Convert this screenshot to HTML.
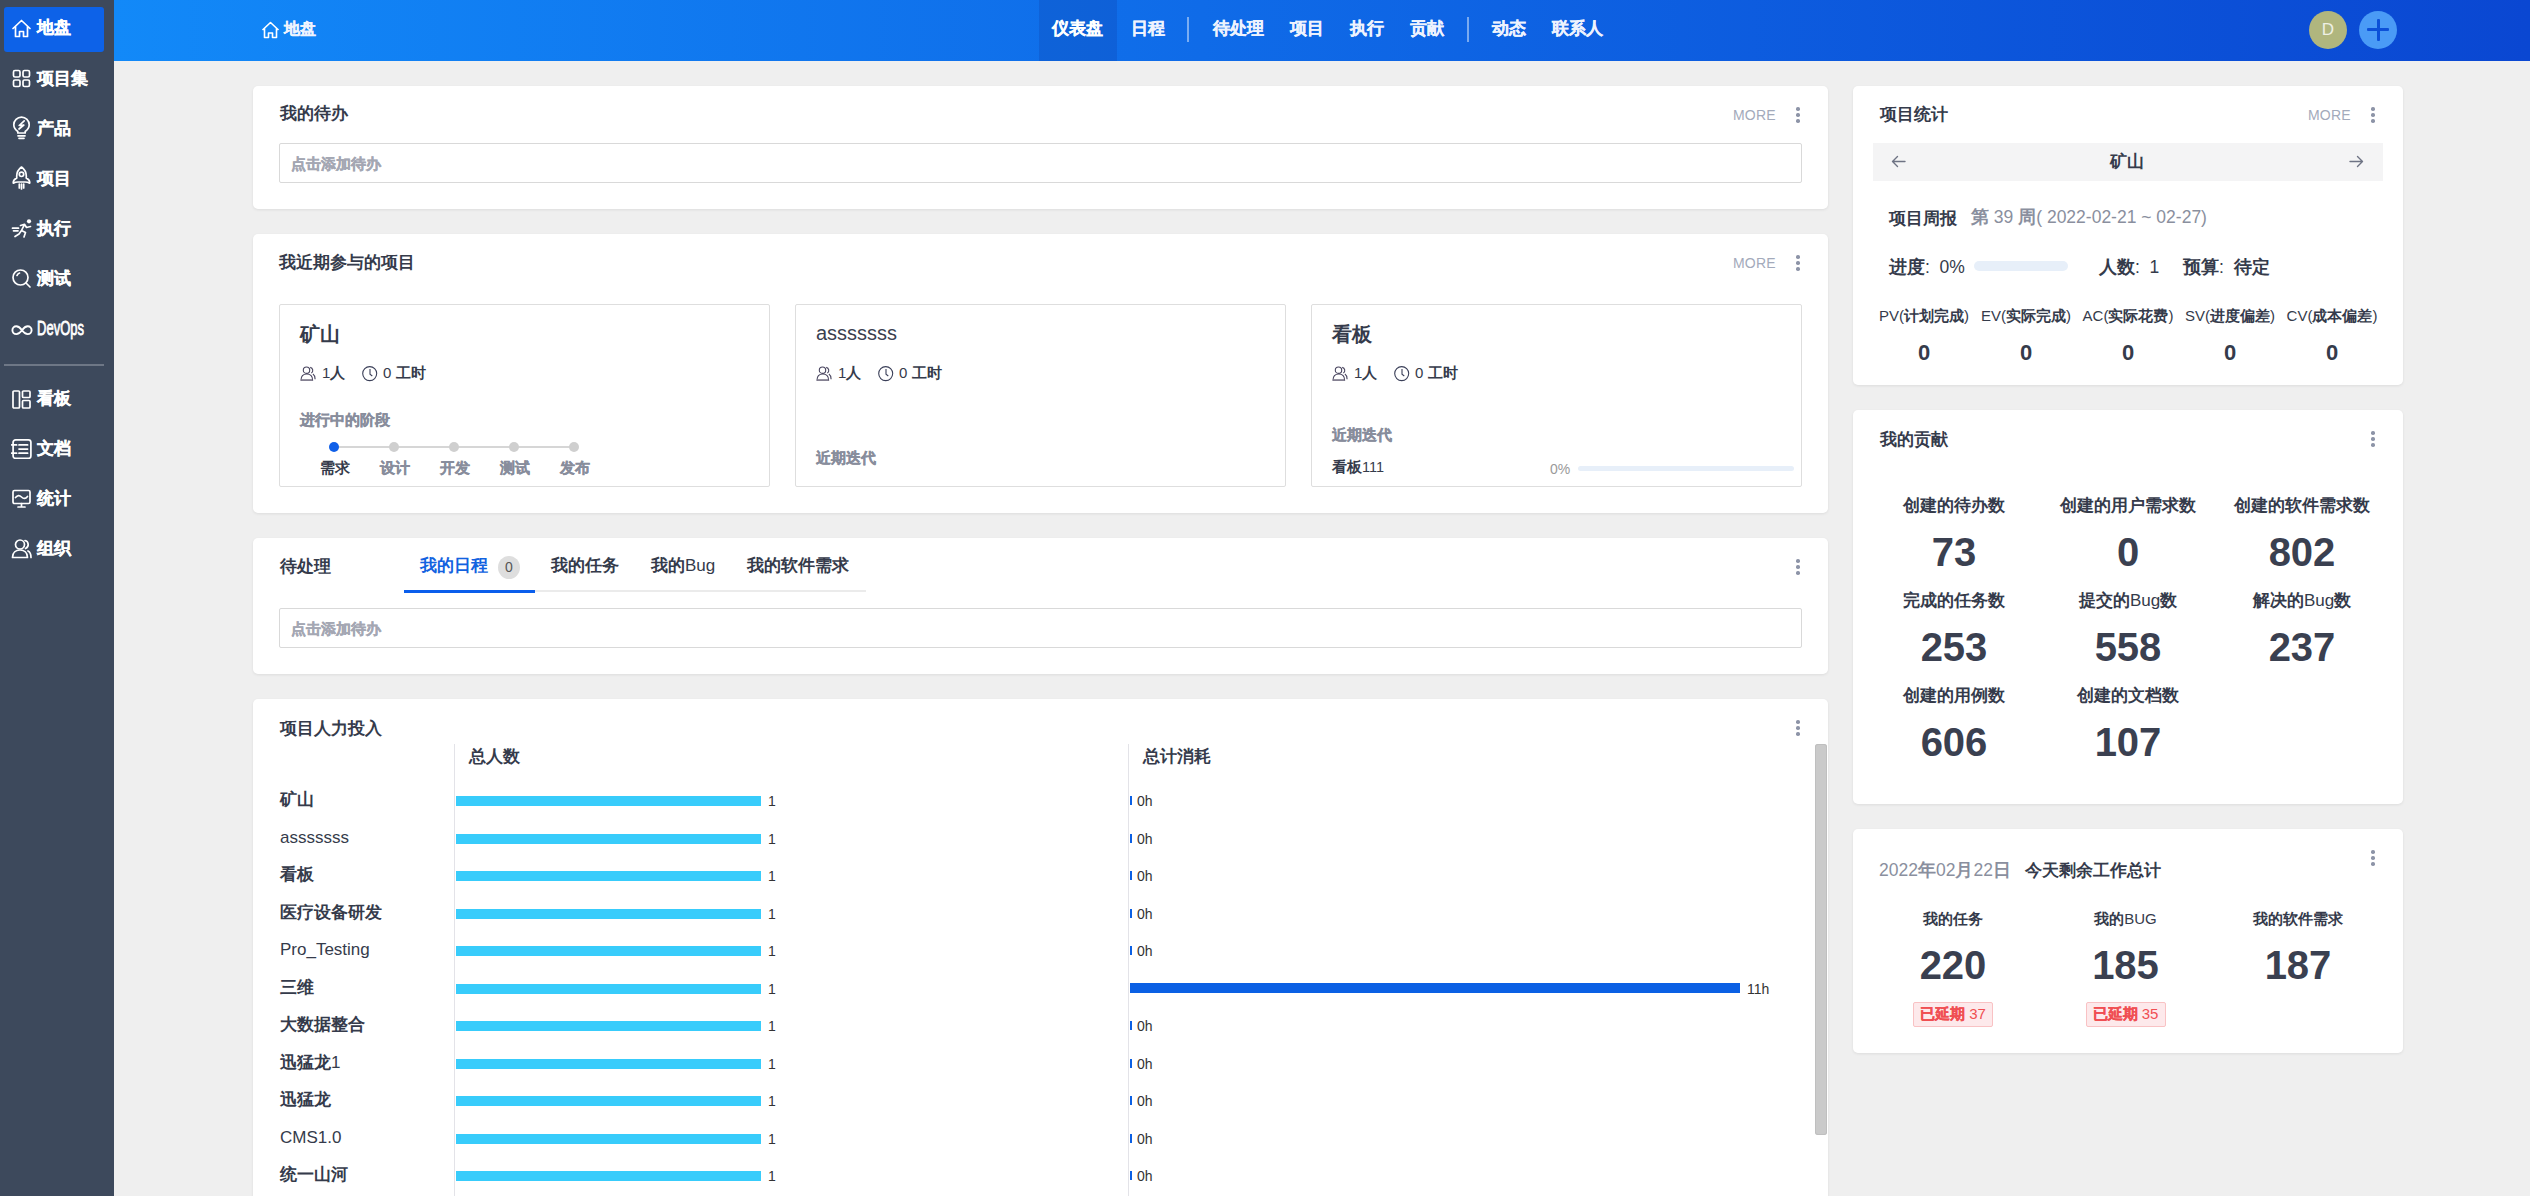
<!DOCTYPE html>
<html><head><meta charset="utf-8">
<style>
*{margin:0;padding:0;box-sizing:border-box}
html,body{width:2530px;height:1196px;overflow:hidden}
body{background:#efefef;font-family:"Liberation Sans",sans-serif;color:#353b4b;position:relative}
.a{position:absolute;white-space:nowrap}
.b{font-weight:bold}
#side{position:absolute;left:0;top:0;width:114px;height:1196px;background:#3d495c}
#side .it{position:absolute;left:37px;font-size:17px;line-height:17px;font-weight:bold;color:#fff;-webkit-text-stroke:0.3px #fff}
#side svg{position:absolute;left:11px;width:21px;height:21px;fill:none;stroke:#fff;stroke-width:1.7;stroke-linecap:round;stroke-linejoin:round}
#hdr{position:absolute;left:114px;top:0;width:2416px;height:61px;background:linear-gradient(90deg,#1289f8 0%,#0f6be8 45%,#0a47d2 100%)}
.nav{position:absolute;top:20px;font-size:17px;line-height:17px;font-weight:bold;color:#eef3fe;-webkit-text-stroke:0.25px #eef3fe}
.card{position:absolute;background:#fff;border-radius:5px;box-shadow:0 1px 3px rgba(0,0,0,0.08)}
.ttl{position:absolute;font-size:17px;line-height:17px;font-weight:bold;color:#353b4b;white-space:nowrap}
.more{position:absolute;font-size:14px;line-height:14px;color:#a3aabb;letter-spacing:0.2px}
.dots{position:absolute;width:4px;height:16px}
.dots i{position:absolute;left:0.25px;width:3.5px;height:3.5px;border-radius:50%;background:#8d94a7}
.inp{position:absolute;border:1px solid #d9d9d9;border-radius:2px;background:#fff}
.ph{position:absolute;font-size:15px;line-height:15px;font-weight:700;color:#a4a7b3;-webkit-text-stroke:0.35px #a4a7b3;white-space:nowrap}
.pc{position:absolute;border:1px solid #dedede;border-radius:2px;background:#fff}
.gray{color:#888d9c;font-weight:700;-webkit-text-stroke:0.35px #888d9c}
</style></head><body>

<!-- SIDEBAR -->
<div id="side">
  <div class="a" style="left:4px;top:7px;width:100px;height:45px;background:#0d62e8;border-radius:3px"></div>
  <svg style="top:18px" viewBox="0 0 21 21"><path d="M2 10.5 L10.5 2.5 L19 10.5 M4.5 8.5 V18.5 H8.5 V13.5 H12.5 V18.5 H16.5 V8.5"/></svg>
  <div class="it" style="top:19px">地盘</div>
  <svg style="top:68px" viewBox="0 0 21 21"><rect x="2.5" y="2.5" width="6.5" height="6.5" rx="1.5"/><rect x="12" y="2.5" width="6.5" height="6.5" rx="1.5"/><rect x="2.5" y="12" width="6.5" height="6.5" rx="1.5"/><rect x="12" y="12" width="6.5" height="6.5" rx="1.5"/></svg>
  <div class="it" style="top:70px">项目集</div>
  <svg style="top:116px;height:24px" viewBox="0 0 21 24"><path d="M6.8 15.5 C4 13.5 2.8 11 2.8 8.8 A7.7 7.7 0 0 1 18.2 8.8 C18.2 11 17 13.5 14.2 15.5 V17 H6.8 Z M7 19.8 H14 M8 22.3 H13 M13.2 4.8 L8.2 9.5 L12.8 9 L8 13"/></svg>
  <div class="it" style="top:120px">产品</div>
  <svg style="top:166px;height:24px" viewBox="0 0 21 24"><path d="M10.5 1 C6.5 4 5.3 8 5.8 12 C3.3 13.3 2 15 2.3 17.2 C3.8 16.4 5.3 16 7 16 H14 C15.7 16 17.2 16.4 18.7 17.2 C19 15 17.7 13.3 15.2 12 C15.7 8 14.5 4 10.5 1 Z"/><circle cx="10.5" cy="8.3" r="2.2"/><path d="M8.3 18 V22 M10.5 18 V23 M12.7 18 V22"/></svg>
  <div class="it" style="top:170px">项目</div>
  <svg style="top:218px;width:22px" viewBox="0 0 22 21"><circle cx="18" cy="3.3" r="2.1" fill="#fff" stroke="none"/><path d="M9.5 7.5 L13.5 6.3 L15.5 9.5 L19.5 8.5 M13.5 6.3 L10.5 12.5 L14.5 14.5 L13 19 M10.5 12.5 L8 16 L4 18.5 M1.5 10.2 H7.5 M2.5 12.8 H7"/></svg>
  <div class="it" style="top:220px">执行</div>
  <svg style="top:268px" viewBox="0 0 21 21"><circle cx="9.5" cy="9.5" r="7.5"/><path d="M15 15 L19 19 M6 7.5 A4 4 0 0 1 8.5 5"/></svg>
  <div class="it" style="top:270px">测试</div>
  <svg style="top:320px;width:22px" viewBox="0 0 22 21" style="stroke-width:2"><path style="stroke-width:1.9" d="M11 10.2 C8.8 7.2 6.8 6.3 5.3 6.3 A3.9 3.9 0 0 0 5.3 14.1 C6.8 14.1 8.8 13.2 11 10.2 C13.2 7.2 15.2 6.3 16.7 6.3 A3.9 3.9 0 0 1 16.7 14.1 C15.2 14.1 13.2 13.2 11 10.2 Z"/></svg>
  <div class="a b" style="left:37px;top:317px;font-size:21px;line-height:21px;color:#fff;font-weight:normal;transform:scaleX(0.62);transform-origin:0 0;-webkit-text-stroke:0.8px #fff">DevOps</div>
  <div class="a" style="left:4px;top:364px;width:100px;height:2px;background:#6e7786"></div>
  <svg style="top:389px" viewBox="0 0 21 21"><rect x="2" y="2" width="6.5" height="17" rx="1"/><rect x="11.5" y="2" width="7.5" height="6.5" rx="1"/><rect x="11.5" y="11.5" width="7.5" height="7.5" rx="1"/></svg>
  <div class="it" style="top:390px">看板</div>
  <svg style="top:438px;width:22px" viewBox="0 0 22 21" style="overflow:visible"><rect x="2.1" y="1.8" width="17.8" height="18.6" rx="2.5"/><path d="M0.6 6.9 H5.6 M0.6 15.2 H5.6 M8 6.9 H16.6 M8 11.1 H16.6 M8 15.2 H16.6"/></svg>
  <div class="it" style="top:440px">文档</div>
  <svg style="top:488px" viewBox="0 0 21 21"><rect x="2" y="2.5" width="17" height="13" rx="1.5"/><path d="M7 19 H14 M10.5 15.5 V19 M4.5 9.5 C6.5 7 8.5 7 10.5 9 C12.5 11 14.5 11 16.5 8.5"/></svg>
  <div class="it" style="top:490px">统计</div>
  <svg style="top:538px" viewBox="0 0 21 21"><circle cx="9" cy="6.5" r="4.5"/><path d="M1.5 19.5 C1.5 14.5 5 12 9 12 C13 12 16.5 14.5 16.5 19.5 Z M14 2.5 A4.2 4.2 0 0 1 14.5 10.5 M17 13 C19 14 20 16.5 20 19.5"/></svg>
  <div class="it" style="top:540px">组织</div>
</div>

<!-- HEADER -->
<div id="hdr">
  <div class="a" style="left:925px;top:0;width:78px;height:61px;background:rgba(10,40,140,0.18)"></div>
</div>
<svg class="a" style="left:261px;top:21px;width:19px;height:18px" viewBox="0 0 19 18" fill="none" stroke="#fff" stroke-width="1.6" stroke-linejoin="round"><path d="M1.5 9 L9.5 1.5 L17.5 9 M3.5 7.5 V16.5 H7.5 V12 H11.5 V16.5 H15.5 V7.5"/></svg>
<div class="nav" style="left:284px;top:21px;font-size:16px;line-height:16px">地盘</div>
<div class="nav" style="left:1052px;color:#fff;-webkit-text-stroke:0.25px #fff">仪表盘</div>
<div class="nav" style="left:1131px">日程</div>
<div class="a" style="left:1187px;top:17px;width:2px;height:25px;background:rgba(255,255,255,0.45)"></div>
<div class="nav" style="left:1213px">待处理</div>
<div class="nav" style="left:1290px">项目</div>
<div class="nav" style="left:1350px">执行</div>
<div class="nav" style="left:1410px">贡献</div>
<div class="a" style="left:1467px;top:17px;width:2px;height:25px;background:rgba(255,255,255,0.45)"></div>
<div class="nav" style="left:1492px">动态</div>
<div class="nav" style="left:1552px">联系人</div>
<div class="a" style="left:2309px;top:11px;width:38px;height:38px;border-radius:50%;background:#b0b67e;color:#eef0e4;font-size:17px;line-height:38px;text-align:center">D</div>
<div class="a" style="left:2359px;top:11px;width:38px;height:38px;border-radius:50%;background:#4a9bf6"></div>
<div class="a" style="left:2367px;top:28px;width:22px;height:3px;background:#0c50d8;border-radius:1px"></div>
<div class="a" style="left:2376.5px;top:19px;width:3px;height:22px;background:#0c50d8;border-radius:1px"></div>

<!-- LEFT COLUMN -->
<!-- card 1 -->
<div class="card" style="left:253px;top:86px;width:1575px;height:123px"></div>
<div class="ttl" style="left:280px;top:105px">我的待办</div>
<div class="more" style="left:1733px;top:108px">MORE</div>
<div class="dots" style="left:1796px;top:107px"><i style="top:0"></i><i style="top:6px"></i><i style="top:12px"></i></div>
<div class="inp" style="left:279px;top:143px;width:1523px;height:40px"></div>
<div class="ph" style="left:291px;top:156px">点击添加待办</div>

<!-- card 2 -->
<div class="card" style="left:253px;top:234px;width:1575px;height:279px"></div>
<div class="ttl" style="left:279px;top:254px">我近期参与的项目</div>
<div class="more" style="left:1733px;top:256px">MORE</div>
<div class="dots" style="left:1796px;top:255px"><i style="top:0"></i><i style="top:6px"></i><i style="top:12px"></i></div>


<!-- project cards -->
<div class="pc" style="left:279px;top:304px;width:491px;height:183px"></div>
<div class="pc" style="left:795px;top:304px;width:491px;height:183px"></div>
<div class="pc" style="left:1311px;top:304px;width:491px;height:183px"></div>

<div class="a b" style="left:300px;top:325px;font-size:19.5px;line-height:19.5px;color:#353b4b">矿山</div>
<div class="a" style="left:816px;top:323px;font-size:20px;line-height:20px;color:#3a4050">asssssss</div>
<div class="a b" style="left:1332px;top:325px;font-size:19.5px;line-height:19.5px;color:#353b4b">看板</div>

<!-- meta rows -->
<svg class="a" style="left:300px;top:366px;width:17px;height:16px" viewBox="0 0 17 16" fill="none" stroke="#48445e" stroke-width="1.1"><circle cx="6.5" cy="4.2" r="3.2"/><path d="M1 14.2 C1 10.4 3.4 8 6.8 8 C10.2 8 12.6 10.4 12.6 14.2 Z M10.2 1.4 A3.1 3.1 0 0 1 11.3 7.1 M12.9 8 C14.4 9 15.1 10.8 15.1 13.2"/><path d="M1.3 14 H12.3" stroke="#8a8595" stroke-width="1.6"/></svg>
<div class="a" style="left:322px;top:365px;font-size:15px;line-height:15px;color:#353b4b">1<b>人</b></div>
<svg class="a" style="left:362px;top:366px;width:16px;height:16px" viewBox="0 0 16 16" fill="none" stroke="#3a3f58" stroke-width="1.1"><circle cx="7.7" cy="7.6" r="7"/><path d="M8 3 V8.3 L10.3 10"/></svg>
<div class="a" style="left:383px;top:365px;font-size:15px;line-height:15px;color:#353b4b">0 <b>工时</b></div>

<svg class="a" style="left:816px;top:366px;width:17px;height:16px" viewBox="0 0 17 16" fill="none" stroke="#48445e" stroke-width="1.1"><circle cx="6.5" cy="4.2" r="3.2"/><path d="M1 14.2 C1 10.4 3.4 8 6.8 8 C10.2 8 12.6 10.4 12.6 14.2 Z M10.2 1.4 A3.1 3.1 0 0 1 11.3 7.1 M12.9 8 C14.4 9 15.1 10.8 15.1 13.2"/><path d="M1.3 14 H12.3" stroke="#8a8595" stroke-width="1.6"/></svg>
<div class="a" style="left:838px;top:365px;font-size:15px;line-height:15px;color:#353b4b">1<b>人</b></div>
<svg class="a" style="left:878px;top:366px;width:16px;height:16px" viewBox="0 0 16 16" fill="none" stroke="#3a3f58" stroke-width="1.1"><circle cx="7.7" cy="7.6" r="7"/><path d="M8 3 V8.3 L10.3 10"/></svg>
<div class="a" style="left:899px;top:365px;font-size:15px;line-height:15px;color:#353b4b">0 <b>工时</b></div>

<svg class="a" style="left:1332px;top:366px;width:17px;height:16px" viewBox="0 0 17 16" fill="none" stroke="#48445e" stroke-width="1.1"><circle cx="6.5" cy="4.2" r="3.2"/><path d="M1 14.2 C1 10.4 3.4 8 6.8 8 C10.2 8 12.6 10.4 12.6 14.2 Z M10.2 1.4 A3.1 3.1 0 0 1 11.3 7.1 M12.9 8 C14.4 9 15.1 10.8 15.1 13.2"/><path d="M1.3 14 H12.3" stroke="#8a8595" stroke-width="1.6"/></svg>
<div class="a" style="left:1354px;top:365px;font-size:15px;line-height:15px;color:#353b4b">1<b>人</b></div>
<svg class="a" style="left:1394px;top:366px;width:16px;height:16px" viewBox="0 0 16 16" fill="none" stroke="#3a3f58" stroke-width="1.1"><circle cx="7.7" cy="7.6" r="7"/><path d="M8 3 V8.3 L10.3 10"/></svg>
<div class="a" style="left:1415px;top:365px;font-size:15px;line-height:15px;color:#353b4b">0 <b>工时</b></div>

<!-- stages -->
<div class="a gray" style="left:300px;top:413px;font-size:14.5px;line-height:14.5px">进行中的阶段</div>
<div class="a" style="left:334px;top:446px;width:240px;height:2px;background:#d6d6d6"></div>
<div class="a" style="left:329px;top:442px;width:10px;height:10px;border-radius:50%;background:#0f5fe8"></div>
<div class="a" style="left:389px;top:442px;width:10px;height:10px;border-radius:50%;background:#cfcfcf"></div>
<div class="a" style="left:449px;top:442px;width:10px;height:10px;border-radius:50%;background:#cfcfcf"></div>
<div class="a" style="left:509px;top:442px;width:10px;height:10px;border-radius:50%;background:#cfcfcf"></div>
<div class="a" style="left:569px;top:442px;width:10px;height:10px;border-radius:50%;background:#cfcfcf"></div>
<div class="a b" style="left:320px;top:461px;font-size:14.5px;line-height:14.5px;color:#353b4b">需求</div>
<div class="a gray" style="left:380px;top:461px;font-size:14.5px;line-height:14.5px">设计</div>
<div class="a gray" style="left:440px;top:461px;font-size:14.5px;line-height:14.5px">开发</div>
<div class="a gray" style="left:500px;top:461px;font-size:14.5px;line-height:14.5px">测试</div>
<div class="a gray" style="left:560px;top:461px;font-size:14.5px;line-height:14.5px">发布</div>

<div class="a gray" style="left:816px;top:451px;font-size:14.5px;line-height:14.5px">近期迭代</div>
<div class="a gray" style="left:1332px;top:428px;font-size:14.5px;line-height:14.5px">近期迭代</div>
<div class="a" style="left:1332px;top:460px;font-size:14.5px;line-height:14.5px;color:#353b4b"><b>看板</b>111</div>
<div class="a" style="left:1550px;top:462px;font-size:14px;line-height:14px;color:#9a9a9a">0%</div>
<div class="a" style="left:1578px;top:466px;width:216px;height:5px;border-radius:3px;background:#e7eff9"></div>

<!-- card 3 -->
<div class="card" style="left:253px;top:538px;width:1575px;height:136px"></div>
<div class="ttl" style="left:280px;top:558px">待处理</div>
<div class="a b" style="left:420px;top:557px;font-size:17px;line-height:17px;color:#1262e0">我的日程</div>
<div class="a" style="left:498px;top:556px;width:22px;height:23px;border-radius:50%;background:#dedede;color:#555;font-size:14px;line-height:23px;text-align:center">0</div>
<div class="a b" style="left:551px;top:557px;font-size:17px;line-height:17px;color:#353b4b">我的任务</div>
<div class="a" style="left:651px;top:557px;font-size:17px;line-height:17px;color:#353b4b"><b>我的</b>Bug</div>
<div class="a b" style="left:747px;top:557px;font-size:17px;line-height:17px;color:#353b4b">我的软件需求</div>
<div class="a" style="left:404px;top:590px;width:462px;height:2px;background:#ebebeb"></div>
<div class="a" style="left:404px;top:590px;width:131px;height:2.5px;background:#0a5eec"></div>
<div class="dots" style="left:1796px;top:559px"><i style="top:0"></i><i style="top:6px"></i><i style="top:12px"></i></div>
<div class="inp" style="left:279px;top:608px;width:1523px;height:40px"></div>
<div class="ph" style="left:291px;top:621px">点击添加待办</div>

<!-- card 4 -->
<div class="card" style="left:253px;top:699px;width:1575px;height:520px"></div>
<div class="ttl" style="left:280px;top:720px">项目人力投入</div>
<div class="dots" style="left:1796px;top:720px"><i style="top:0"></i><i style="top:6px"></i><i style="top:12px"></i></div>
<div class="a" style="left:1815px;top:744px;width:12px;height:391px;border-radius:3px;background:#cacaca;box-shadow:inset 0 0 0 1px #bfbfbf"></div>
<div class="a" style="left:454px;top:744px;width:1px;height:460px;background:#e3e3e8"></div>
<div class="a" style="left:1128px;top:744px;width:1px;height:460px;background:#e3e3e8"></div>
<div class="a b" style="left:469px;top:748px;font-size:17px;line-height:17px;color:#353b4b">总人数</div>
<div class="a b" style="left:1143px;top:748px;font-size:17px;line-height:17px;color:#353b4b">总计消耗</div>
<div class="a" style="left:280px;top:791.0px;font-size:17px;line-height:17px;color:#353b4b"><b>矿山</b></div>
<div class="a" style="left:456px;top:796.0px;width:305px;height:10px;background:#38ccfb"></div>
<div class="a" style="left:768px;top:794.0px;font-size:14px;line-height:14px;color:#333">1</div>
<div class="a" style="left:1130px;top:796.0px;width:1.5px;height:9px;background:#0b60e4"></div>
<div class="a" style="left:1137px;top:794.0px;font-size:14px;line-height:14px;color:#333">0h</div>
<div class="a" style="left:280px;top:828.5px;font-size:17px;line-height:17px;color:#353b4b">asssssss</div>
<div class="a" style="left:456px;top:833.5px;width:305px;height:10px;background:#38ccfb"></div>
<div class="a" style="left:768px;top:831.5px;font-size:14px;line-height:14px;color:#333">1</div>
<div class="a" style="left:1130px;top:833.5px;width:1.5px;height:9px;background:#0b60e4"></div>
<div class="a" style="left:1137px;top:831.5px;font-size:14px;line-height:14px;color:#333">0h</div>
<div class="a" style="left:280px;top:866.0px;font-size:17px;line-height:17px;color:#353b4b"><b>看板</b></div>
<div class="a" style="left:456px;top:871.0px;width:305px;height:10px;background:#38ccfb"></div>
<div class="a" style="left:768px;top:869.0px;font-size:14px;line-height:14px;color:#333">1</div>
<div class="a" style="left:1130px;top:871.0px;width:1.5px;height:9px;background:#0b60e4"></div>
<div class="a" style="left:1137px;top:869.0px;font-size:14px;line-height:14px;color:#333">0h</div>
<div class="a" style="left:280px;top:903.5px;font-size:17px;line-height:17px;color:#353b4b"><b>医疗设备研发</b></div>
<div class="a" style="left:456px;top:908.5px;width:305px;height:10px;background:#38ccfb"></div>
<div class="a" style="left:768px;top:906.5px;font-size:14px;line-height:14px;color:#333">1</div>
<div class="a" style="left:1130px;top:908.5px;width:1.5px;height:9px;background:#0b60e4"></div>
<div class="a" style="left:1137px;top:906.5px;font-size:14px;line-height:14px;color:#333">0h</div>
<div class="a" style="left:280px;top:941.0px;font-size:17px;line-height:17px;color:#353b4b">Pro_Testing</div>
<div class="a" style="left:456px;top:946.0px;width:305px;height:10px;background:#38ccfb"></div>
<div class="a" style="left:768px;top:944.0px;font-size:14px;line-height:14px;color:#333">1</div>
<div class="a" style="left:1130px;top:946.0px;width:1.5px;height:9px;background:#0b60e4"></div>
<div class="a" style="left:1137px;top:944.0px;font-size:14px;line-height:14px;color:#333">0h</div>
<div class="a" style="left:280px;top:978.5px;font-size:17px;line-height:17px;color:#353b4b"><b>三维</b></div>
<div class="a" style="left:456px;top:983.5px;width:305px;height:10px;background:#38ccfb"></div>
<div class="a" style="left:768px;top:981.5px;font-size:14px;line-height:14px;color:#333">1</div>
<div class="a" style="left:1130px;top:983.0px;width:610px;height:10px;background:#0b60e4"></div>
<div class="a" style="left:1747px;top:981.5px;font-size:14px;line-height:14px;color:#333">11h</div>
<div class="a" style="left:280px;top:1016.0px;font-size:17px;line-height:17px;color:#353b4b"><b>大数据整合</b></div>
<div class="a" style="left:456px;top:1021.0px;width:305px;height:10px;background:#38ccfb"></div>
<div class="a" style="left:768px;top:1019.0px;font-size:14px;line-height:14px;color:#333">1</div>
<div class="a" style="left:1130px;top:1021.0px;width:1.5px;height:9px;background:#0b60e4"></div>
<div class="a" style="left:1137px;top:1019.0px;font-size:14px;line-height:14px;color:#333">0h</div>
<div class="a" style="left:280px;top:1053.5px;font-size:17px;line-height:17px;color:#353b4b"><b>迅猛龙</b>1</div>
<div class="a" style="left:456px;top:1058.5px;width:305px;height:10px;background:#38ccfb"></div>
<div class="a" style="left:768px;top:1056.5px;font-size:14px;line-height:14px;color:#333">1</div>
<div class="a" style="left:1130px;top:1058.5px;width:1.5px;height:9px;background:#0b60e4"></div>
<div class="a" style="left:1137px;top:1056.5px;font-size:14px;line-height:14px;color:#333">0h</div>
<div class="a" style="left:280px;top:1091.0px;font-size:17px;line-height:17px;color:#353b4b"><b>迅猛龙</b></div>
<div class="a" style="left:456px;top:1096.0px;width:305px;height:10px;background:#38ccfb"></div>
<div class="a" style="left:768px;top:1094.0px;font-size:14px;line-height:14px;color:#333">1</div>
<div class="a" style="left:1130px;top:1096.0px;width:1.5px;height:9px;background:#0b60e4"></div>
<div class="a" style="left:1137px;top:1094.0px;font-size:14px;line-height:14px;color:#333">0h</div>
<div class="a" style="left:280px;top:1128.5px;font-size:17px;line-height:17px;color:#353b4b">CMS1.0</div>
<div class="a" style="left:456px;top:1133.5px;width:305px;height:10px;background:#38ccfb"></div>
<div class="a" style="left:768px;top:1131.5px;font-size:14px;line-height:14px;color:#333">1</div>
<div class="a" style="left:1130px;top:1133.5px;width:1.5px;height:9px;background:#0b60e4"></div>
<div class="a" style="left:1137px;top:1131.5px;font-size:14px;line-height:14px;color:#333">0h</div>
<div class="a" style="left:280px;top:1166.0px;font-size:17px;line-height:17px;color:#353b4b"><b>统一山河</b></div>
<div class="a" style="left:456px;top:1171.0px;width:305px;height:10px;background:#38ccfb"></div>
<div class="a" style="left:768px;top:1169.0px;font-size:14px;line-height:14px;color:#333">1</div>
<div class="a" style="left:1130px;top:1171.0px;width:1.5px;height:9px;background:#0b60e4"></div>
<div class="a" style="left:1137px;top:1169.0px;font-size:14px;line-height:14px;color:#333">0h</div>


<!-- RIGHT COLUMN -->
<div class="card" style="left:1853px;top:86px;width:550px;height:299px"></div>
<div class="ttl" style="left:1880px;top:106px">项目统计</div>
<div class="more" style="left:2308px;top:108px">MORE</div>
<div class="dots" style="left:2371px;top:107px"><i style="top:0"></i><i style="top:6px"></i><i style="top:12px"></i></div>
<div class="a" style="left:1873px;top:143px;width:510px;height:38px;background:#f4f4f5"></div>
<svg class="a" style="left:1891px;top:155px;width:15px;height:13px" viewBox="0 0 15 13" fill="none" stroke="#6e7384" stroke-width="1.4" stroke-linecap="round" stroke-linejoin="round"><path d="M14 6.5 H1.5 M6.5 1.5 L1.5 6.5 L6.5 11.5"/></svg>
<svg class="a" style="left:2349px;top:155px;width:15px;height:13px" viewBox="0 0 15 13" fill="none" stroke="#6e7384" stroke-width="1.4" stroke-linecap="round" stroke-linejoin="round"><path d="M1 6.5 H13.5 M8.5 1.5 L13.5 6.5 L8.5 11.5"/></svg>
<div class="ttl" style="left:2110px;top:153px">矿山</div>
<div class="ttl" style="left:1889px;top:210px">项目周报</div>
<div class="a" style="left:1971px;top:207px;font-size:17.5px;line-height:20px;color:#8a8f9e"><b>第</b> 39 <b>周</b>( 2022-02-21 ~ 02-27)</div>
<div class="a" style="left:1889px;top:257px;font-size:17.5px;line-height:20px;color:#353b4b"><b>进度</b>:&nbsp; 0%</div>
<div class="a" style="left:1974px;top:261px;width:94px;height:10px;border-radius:5px;background:#e7eff9"></div>
<div class="a" style="left:2099px;top:257px;font-size:17.5px;line-height:20px;color:#353b4b"><b>人数</b>:&nbsp; 1</div>
<div class="a" style="left:2183px;top:257px;font-size:17.5px;line-height:20px;color:#353b4b"><b>预算</b>:&nbsp; <b>待定</b></div>
<div class="a" style="left:1864px;width:120px;text-align:center;top:307px;font-size:15px;line-height:18px;color:#353b4b">PV(<b>计划完成</b>)</div>
<div class="a b" style="left:1894px;width:60px;text-align:center;top:342px;font-size:22px;line-height:22px;color:#353b4b">0</div>
<div class="a" style="left:1966px;width:120px;text-align:center;top:307px;font-size:15px;line-height:18px;color:#353b4b">EV(<b>实际完成</b>)</div>
<div class="a b" style="left:1996px;width:60px;text-align:center;top:342px;font-size:22px;line-height:22px;color:#353b4b">0</div>
<div class="a" style="left:2068px;width:120px;text-align:center;top:307px;font-size:15px;line-height:18px;color:#353b4b">AC(<b>实际花费</b>)</div>
<div class="a b" style="left:2098px;width:60px;text-align:center;top:342px;font-size:22px;line-height:22px;color:#353b4b">0</div>
<div class="a" style="left:2170px;width:120px;text-align:center;top:307px;font-size:15px;line-height:18px;color:#353b4b">SV(<b>进度偏差</b>)</div>
<div class="a b" style="left:2200px;width:60px;text-align:center;top:342px;font-size:22px;line-height:22px;color:#353b4b">0</div>
<div class="a" style="left:2272px;width:120px;text-align:center;top:307px;font-size:15px;line-height:18px;color:#353b4b">CV(<b>成本偏差</b>)</div>
<div class="a b" style="left:2302px;width:60px;text-align:center;top:342px;font-size:22px;line-height:22px;color:#353b4b">0</div>

<div class="card" style="left:1853px;top:410px;width:550px;height:394px"></div>
<div class="ttl" style="left:1880px;top:431px">我的贡献</div>
<div class="dots" style="left:2371px;top:431px"><i style="top:0"></i><i style="top:6px"></i><i style="top:12px"></i></div>
<div class="a" style="left:1854px;width:200px;text-align:center;top:497px;font-size:17px;line-height:17px;color:#353b4b"><b>创建的待办数</b></div>
<div class="a b" style="left:1854px;width:200px;text-align:center;top:532px;font-size:40px;line-height:40px;color:#3a4050">73</div>
<div class="a" style="left:2028px;width:200px;text-align:center;top:497px;font-size:17px;line-height:17px;color:#353b4b"><b>创建的用户需求数</b></div>
<div class="a b" style="left:2028px;width:200px;text-align:center;top:532px;font-size:40px;line-height:40px;color:#3a4050">0</div>
<div class="a" style="left:2202px;width:200px;text-align:center;top:497px;font-size:17px;line-height:17px;color:#353b4b"><b>创建的软件需求数</b></div>
<div class="a b" style="left:2202px;width:200px;text-align:center;top:532px;font-size:40px;line-height:40px;color:#3a4050">802</div>
<div class="a" style="left:1854px;width:200px;text-align:center;top:592px;font-size:17px;line-height:17px;color:#353b4b"><b>完成的任务数</b></div>
<div class="a b" style="left:1854px;width:200px;text-align:center;top:627px;font-size:40px;line-height:40px;color:#3a4050">253</div>
<div class="a" style="left:2028px;width:200px;text-align:center;top:592px;font-size:17px;line-height:17px;color:#353b4b"><b>提交的</b>Bug<b>数</b></div>
<div class="a b" style="left:2028px;width:200px;text-align:center;top:627px;font-size:40px;line-height:40px;color:#3a4050">558</div>
<div class="a" style="left:2202px;width:200px;text-align:center;top:592px;font-size:17px;line-height:17px;color:#353b4b"><b>解决的</b>Bug<b>数</b></div>
<div class="a b" style="left:2202px;width:200px;text-align:center;top:627px;font-size:40px;line-height:40px;color:#3a4050">237</div>
<div class="a" style="left:1854px;width:200px;text-align:center;top:687px;font-size:17px;line-height:17px;color:#353b4b"><b>创建的用例数</b></div>
<div class="a b" style="left:1854px;width:200px;text-align:center;top:722px;font-size:40px;line-height:40px;color:#3a4050">606</div>
<div class="a" style="left:2028px;width:200px;text-align:center;top:687px;font-size:17px;line-height:17px;color:#353b4b"><b>创建的文档数</b></div>
<div class="a b" style="left:2028px;width:200px;text-align:center;top:722px;font-size:40px;line-height:40px;color:#3a4050">107</div>

<div class="card" style="left:1853px;top:829px;width:550px;height:224px"></div>
<div class="a" style="left:1879px;top:860px;font-size:17.5px;line-height:20px;color:#8a8f9e">2022<b>年</b>02<b>月</b>22<b>日</b></div>
<div class="ttl" style="left:2025px;top:862px">今天剩余工作总计</div>
<div class="dots" style="left:2371px;top:850px"><i style="top:0"></i><i style="top:6px"></i><i style="top:12px"></i></div>
<div class="a" style="left:1853.0px;width:200px;text-align:center;top:911px;font-size:15px;line-height:15px;color:#353b4b"><b>我的任务</b></div>
<div class="a b" style="left:1853.0px;width:200px;text-align:center;top:945px;font-size:40px;line-height:40px;color:#3a4050">220</div>
<div class="a" style="left:1913.0px;top:1002px;width:80px;height:25px;border:1px solid #f9c2c4;background:#fde9eb;border-radius:2px;color:#f04f53;font-size:15px;line-height:22px;text-align:center"><b style="-webkit-text-stroke:0.3px #f04f53">已延期</b> 37</div>
<div class="a" style="left:2025.5px;width:200px;text-align:center;top:911px;font-size:15px;line-height:15px;color:#353b4b"><b>我的</b>BUG</div>
<div class="a b" style="left:2025.5px;width:200px;text-align:center;top:945px;font-size:40px;line-height:40px;color:#3a4050">185</div>
<div class="a" style="left:2085.5px;top:1002px;width:80px;height:25px;border:1px solid #f9c2c4;background:#fde9eb;border-radius:2px;color:#f04f53;font-size:15px;line-height:22px;text-align:center"><b style="-webkit-text-stroke:0.3px #f04f53">已延期</b> 35</div>
<div class="a" style="left:2198.0px;width:200px;text-align:center;top:911px;font-size:15px;line-height:15px;color:#353b4b"><b>我的软件需求</b></div>
<div class="a b" style="left:2198.0px;width:200px;text-align:center;top:945px;font-size:40px;line-height:40px;color:#3a4050">187</div>
</body></html>
